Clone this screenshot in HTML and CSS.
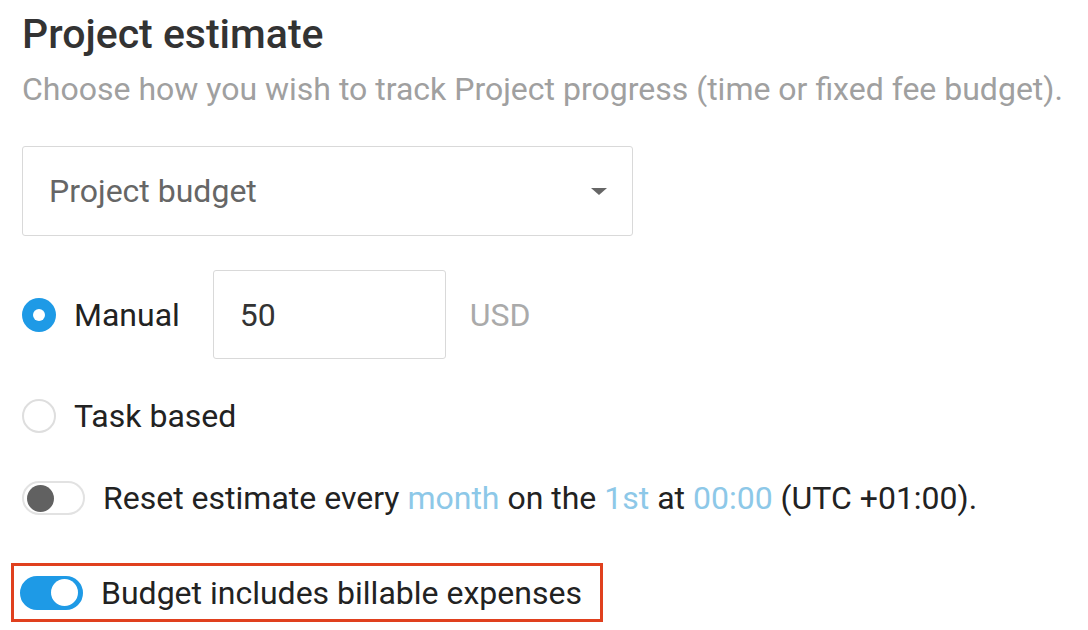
FILE: index.html
```html
<!DOCTYPE html>
<html lang="en">
<head>
<meta charset="UTF-8">
<meta name="viewport" content="width=device-width, initial-scale=1.0">
<title>Project estimate</title>
<link rel="stylesheet" href="styles.css">
</head>
<body>
<div class="page">
  <h1 class="title">Project estimate</h1>
  <p class="subtitle">Choose how you wish to track Project progress (time or fixed fee budget).</p>

  <div class="select">
    <span>Project budget</span>
    <span class="caret"></span>
  </div>

  <div class="row row-manual">
    <span class="radio checked"></span>
    <span class="label">Manual</span>
    <div class="amount">50</div>
    <span class="currency">USD</span>
  </div>

  <div class="row row-task">
    <span class="radio"></span>
    <span class="label">Task based</span>
  </div>

  <div class="row row-reset">
    <span class="toggle"><span class="knob"></span></span>
    <span class="label">Reset estimate every <span class="link">month</span> on the <span class="link">1st</span> at <span class="link">00:00</span> (UTC +01:00).</span>
  </div>

  <div class="highlight">
    <span class="toggle on"><span class="knob"></span></span>
    <span class="label">Budget includes billable expenses</span>
  </div>
</div>
</body>
</html>
```

FILE: styles.css
```css
body {
  margin: 0;
  background: #fff;
  font-family: Roboto, "Liberation Sans", Arial, sans-serif;
  color: #222;
}
.page {
  padding: 8px 0 0 22px;
}
.title {
  margin: 0;
  font-size: 41px;
  font-weight: 500;
  line-height: 52px;
  color: #333;
}
.subtitle {
  margin: 9px 0 0;
  font-size: 32px;
  line-height: 40px;
  color: #a0a0a0;
}
.select {
  margin-top: 37px;
  width: 558px;
  height: 88px;
  border: 1px solid #d9d9d9;
  border-radius: 3px;
  padding: 0 25px 0 26px;
  display: flex;
  align-items: center;
  justify-content: space-between;
  font-size: 32px;
  color: #666;
}
.caret {
  width: 0;
  height: 0;
  border-left: 8px solid transparent;
  border-right: 8px solid transparent;
  border-top: 7px solid #666;
}
.row {
  display: flex;
  align-items: center;
  font-size: 32px;
}
.row-manual {
  margin-top: 34px;
}
.row-task {
  margin-top: 37px;
  height: 40px;
}
.row-reset {
  margin-top: 42px;
  height: 40px;
}
.radio {
  width: 34px;
  height: 34px;
  border-radius: 50%;
  border: 2px solid #dedede;
  box-sizing: border-box;
  margin-right: 18px;
  flex: none;
}
.radio.checked {
  border: none;
  background: #1e9ae6;
  display: flex;
  align-items: center;
  justify-content: center;
}
.radio.checked::after {
  content: "";
  width: 12px;
  height: 12px;
  border-radius: 50%;
  background: #fff;
}
.amount {
  margin-left: 33px;
  width: 233px;
  height: 89px;
  border: 1px solid #d9d9d9;
  border-radius: 3px;
  box-sizing: border-box;
  display: flex;
  align-items: center;
  padding-left: 26px;
  color: #333;
}
.currency {
  margin-left: 24px;
  color: #aaa;
}
.link {
  color: #8dc8e8;
}
.toggle {
  width: 63px;
  height: 34px;
  border-radius: 17px;
  border: 2px solid #e2e2e2;
  box-sizing: border-box;
  background: #fff;
  display: flex;
  align-items: center;
  padding: 0 3px;
  margin-right: 18px;
  flex: none;
}
.knob {
  width: 27px;
  height: 27px;
  border-radius: 50%;
  background: #616161;
}
.toggle.on {
  background: #1e9ae6;
  border-color: #1e9ae6;
  justify-content: flex-end;
}
.toggle.on .knob {
  background: #fff;
}
.highlight {
  margin: 45px 0 0 -11px;
  width: 580px;
  height: 53px;
  border: 3px solid #e0401e;
  display: flex;
  align-items: center;
  padding-left: 6px;
  font-size: 32px;
}
```
